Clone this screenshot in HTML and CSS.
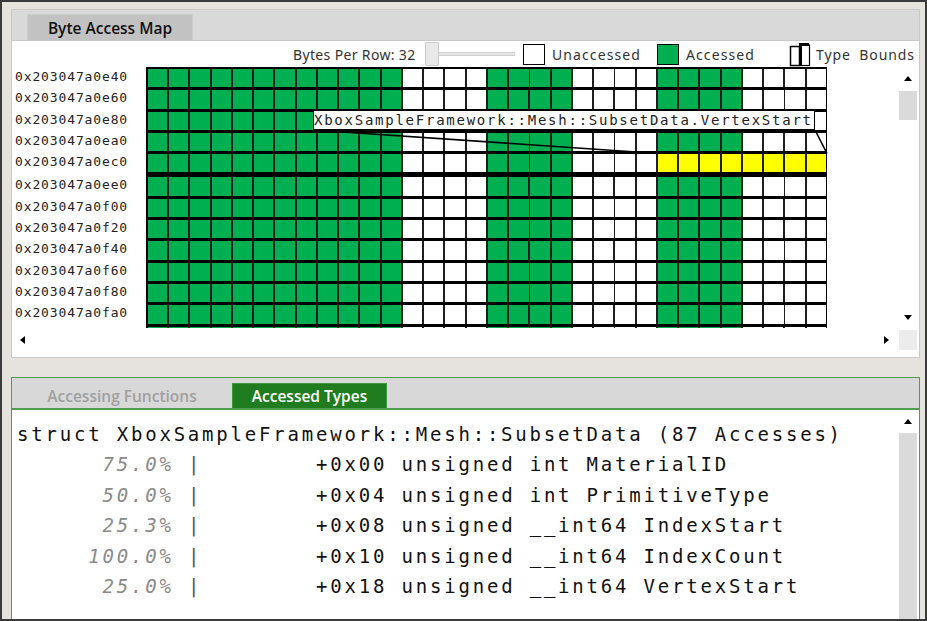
FILE: index.html
```html
<!DOCTYPE html>
<html>
<head>
<meta charset="utf-8">
<title>Byte Access Map</title>
<link rel="stylesheet" href="styles.css">
</head>
<body>
<div class="app">
  <section class="panel map-panel">
    <div class="tabbar">
      <div class="tab-map">Byte Access Map</div>
    </div>
    <div class="map-body">
      <div class="legend">
        <span class="bpr">Bytes Per Row: 32</span>
        <span class="slider"><span class="s-thumb"></span><span class="s-track"></span></span>
        <span class="swatch sw-white"></span><span class="lg-text t-unacc">Unaccessed</span>
        <span class="swatch sw-green"></span><span class="lg-text t-acc">Accessed</span>
        <svg class="bounds-icon" width="22" height="24" viewBox="0 0 22 24">
          <rect x="1.5" y="3.5" width="9" height="19" fill="#fff" stroke="#000" stroke-width="1.5"/>
          <rect x="11" y="2" width="9.5" height="20.5" fill="#fff" stroke="#000" stroke-width="1.2"/>
          <path d="M11.5 23 V1.5 H20" fill="none" stroke="#000" stroke-width="3"/>
        </svg>
        <span class="lg-text t-bounds">Type Bounds</span>
      </div>

      <div class="viewport">
        <div class="rows">
          <div class="row first"><span class="addr">0x203047a0e40</span><div class="cells"></div></div>
          <div class="row"><span class="addr">0x203047a0e60</span><div class="cells"></div></div>
          <div class="row"><span class="addr">0x203047a0e80</span><div class="cells"></div></div>
          <div class="row"><span class="addr">0x203047a0ea0</span><div class="cells"></div></div>
          <div class="row bound"><span class="addr">0x203047a0ec0</span><div class="cells hl"></div></div>
          <div class="row"><span class="addr">0x203047a0ee0</span><div class="cells"></div></div>
          <div class="row"><span class="addr">0x203047a0f00</span><div class="cells"></div></div>
          <div class="row"><span class="addr">0x203047a0f20</span><div class="cells"></div></div>
          <div class="row"><span class="addr">0x203047a0f40</span><div class="cells"></div></div>
          <div class="row"><span class="addr">0x203047a0f60</span><div class="cells"></div></div>
          <div class="row"><span class="addr">0x203047a0f80</span><div class="cells"></div></div>
          <div class="row"><span class="addr">0x203047a0fa0</span><div class="cells"></div></div>
          <div class="row"><span class="addr">0x203047a0fc0</span><div class="cells"></div></div>
        </div>
        <svg class="leader" width="887" height="261" viewBox="0 0 887 261">
          <line x1="301" y1="63" x2="646" y2="86.5" stroke="#000" stroke-width="1.6"/>
          <line x1="803" y1="63" x2="815" y2="86.5" stroke="#000" stroke-width="1.6"/>
        </svg>
        <div class="tip">XboxSampleFramework::Mesh::SubsetData.VertexStart</div>
      </div>

      <div class="vscroll">
        <div class="sb-btn"><span class="arr-up"></span></div>
        <div class="v-thumb"></div>
        <div class="sb-fill"></div>
        <div class="sb-btn"><span class="arr-down"></span></div>
      </div>

      <div class="hscroll">
        <span class="arr-left"></span>
        <span class="arr-right"></span>
      </div>
      <div class="corner"></div>
    </div>
  </section>

  <section class="panel types-panel">
    <div class="types-tabbar">
      <div class="tab-inactive">Accessing Functions</div>
      <div class="tab-active">Accessed Types</div>
    </div>
    <div class="types-body">
      <div class="code">
        <div class="line">struct XboxSampleFramework::Mesh::SubsetData (87 Accesses)</div>
        <div class="line">      <span class="pct">75.0%</span> <span class="bar">|</span>        +0x00 unsigned int MaterialID</div>
        <div class="line">      <span class="pct">50.0%</span> <span class="bar">|</span>        +0x04 unsigned int PrimitiveType</div>
        <div class="line">      <span class="pct">25.3%</span> <span class="bar">|</span>        +0x08 unsigned __int64 IndexStart</div>
        <div class="line">     <span class="pct">100.0%</span> <span class="bar">|</span>        +0x10 unsigned __int64 IndexCount</div>
        <div class="line">      <span class="pct">25.0%</span> <span class="bar">|</span>        +0x18 unsigned __int64 VertexStart</div>
      </div>
      <div class="vscroll2">
        <div class="sb-btn2"><span class="arr-up"></span></div>
        <div class="track2"></div>
      </div>
    </div>
  </section>
</div>
</body>
</html>
```

FILE: styles.css
```css
* { box-sizing: border-box; margin: 0; padding: 0; }

html, body {
  width: 927px;
  height: 621px;
  overflow: hidden;
  background: #e6e2de;
}

.app {
  width: 927px;
  height: 621px;
  border: 2px solid #3a3a3a;
  background: #e6e2de;
  overflow: hidden;
  padding: 7px 0 0 9px;
}

.panel { width: 909px; }

/* ---------- top panel ---------- */
.map-panel {
  border: 1px solid #c9c9c9;
  background: #fff;
}

.tabbar {
  height: 31px;
  background: #d9d9d9;
  border-bottom: 1px solid #c9c9c9;
  display: flex;
  align-items: flex-end;
  padding-left: 15px;
}

.tab-map {
  width: 166px;
  height: 26px;
  background: #c2c2c2;
  border: 1px solid #cdcdcd;
  border-bottom: none;
  display: flex;
  align-items: center;
  justify-content: center;
  font: 600 15.5px "Open Sans", "Noto Sans", sans-serif;
  color: #111;
}

.map-body {
  display: grid;
  grid-template-columns: 887px 18px;
  grid-template-rows: 26px 261px 29px;
  padding-right: 2px;
}

.legend {
  grid-column: 1 / 3;
  display: flex;
  align-items: center;
  padding-left: 281px;
  font: 13px "Noto Sans", sans-serif;
  color: #333;
  white-space: nowrap;
}

.bpr { width: 132px; font-size: 14px; letter-spacing: 0.35px; }

.slider {
  width: 90px;
  height: 24px;
  display: flex;
  align-items: center;
  margin-right: 8px;
}
.s-thumb {
  width: 14px;
  height: 24px;
  background: #e9e9e9;
  border: 1px solid #cacaca;
  border-radius: 2px;
}
.s-track {
  width: 76px;
  height: 4px;
  background: #e6e6e6;
  border: 1px solid #d2d2d2;
  border-left: none;
}

.swatch {
  width: 22px;
  height: 21px;
  border: 1.5px solid #000;
  margin-top: 1px;
}
.sw-white { background: #fff; }
.sw-green { background: #00b050; }

.lg-text {
  font-size: 14px;
  letter-spacing: 1.1px;
  margin-left: 7px;
}
.t-unacc { width: 105px; }
.t-acc { width: 103px; }
.t-bounds { margin-left: 5px; word-spacing: 4px; letter-spacing: 0.9px; }

.bounds-icon { margin-top: 1px; }

/* map viewport */
.viewport {
  position: relative;
  overflow: hidden;
  padding-left: 3px;
}

.row {
  display: flex;
  align-items: flex-start;
}

.addr {
  width: 131px;
  height: 18.3px;
  line-height: 18.3px;
  font: 13px "DejaVu Sans Mono", monospace;
  letter-spacing: 0.87px;
  color: #222;
  white-space: nowrap;
}

.cells {
  width: 681px;
  height: 21.3px;
  border-style: solid;
  border-color: #000;
  border-width: 0 1px 3px 2px;
  background:
    repeating-linear-gradient(to right, transparent 0 19.25px, #1e1e1e 19.25px 21.25px),
    linear-gradient(to right,
      #00b050 0 255px, #fff 255px 340px,
      #00b050 340px 425px, #fff 425px 510px,
      #00b050 510px 595px, #fff 595px 680px);
}

.cells.hl {
  background:
    repeating-linear-gradient(to right, transparent 0 19.25px, #1e1e1e 19.25px 21.25px),
    linear-gradient(to right,
      #00b050 0 255px, #fff 255px 340px,
      #00b050 340px 425px, #fff 425px 510px,
      #ffff00 510px 680px);
}

.row.first .cells { height: 23.3px; border-top-width: 2px; }
.row.first .addr { margin-top: 2px; }
.row.bound .cells { height: 23.3px; border-bottom-width: 5px; }

.leader {
  position: absolute;
  left: 0;
  top: 0;
  pointer-events: none;
}

.tip {
  position: absolute;
  left: 301px;
  top: 43px;
  width: 502px;
  height: 20px;
  background: #fff;
  border: 1px solid #000;
  font: 14px "DejaVu Sans Mono", monospace;
  letter-spacing: 1.75px;
  line-height: 18px;
  padding-left: 0;
  color: #222;
  white-space: nowrap;
  overflow: hidden;
}

/* scrollbars */
.vscroll {
  grid-column: 2;
  grid-row: 2;
  display: flex;
  flex-direction: column;
}
.sb-btn {
  height: 22px;
  display: flex;
  align-items: center;
  justify-content: center;
}
.v-thumb {
  margin-top: 2px;
  height: 29px;
  background: #dadada;
}
.sb-fill { flex: 1; }

.arr-up {
  width: 0; height: 0;
  border-left: 4.5px solid transparent;
  border-right: 4.5px solid transparent;
  border-bottom: 5px solid #000;
}
.arr-down {
  width: 0; height: 0;
  border-left: 4.5px solid transparent;
  border-right: 4.5px solid transparent;
  border-top: 5px solid #000;
}
.arr-left {
  width: 0; height: 0;
  border-top: 4.5px solid transparent;
  border-bottom: 4.5px solid transparent;
  border-right: 5px solid #000;
}
.arr-right {
  width: 0; height: 0;
  border-top: 4.5px solid transparent;
  border-bottom: 4.5px solid transparent;
  border-left: 5px solid #000;
}

.hscroll {
  grid-column: 1;
  grid-row: 3;
  height: 24px;
  display: flex;
  align-items: center;
  justify-content: space-between;
  padding: 0 10px 0 8px;
}
.corner {
  grid-column: 2;
  grid-row: 3;
  margin-top: 2px;
  height: 20px;
  background: #ececec;
}

/* ---------- bottom panel ---------- */
.types-panel {
  margin-top: 19px;
  border: 1px solid #4f9d4f;
  border-bottom: none;
  height: 260px;
  background: #fff;
}

.types-tabbar {
  height: 32px;
  background: #d8d8d8;
  border-bottom: 2px solid #4f9d4f;
  display: flex;
  align-items: flex-end;
}

.tab-inactive,
.tab-active {
  height: 25px;
  display: flex;
  align-items: center;
  justify-content: center;
  font: 600 15.5px "Open Sans", "Noto Sans", sans-serif;
  white-space: nowrap;
}
.tab-inactive { width: 220px; color: #a0a0a0; }
.tab-active {
  width: 155px;
  background: #1f7d1f;
  color: #fff;
  border: 1px solid #3c963c;
  border-bottom: none;
}

.types-body {
  display: grid;
  grid-template-columns: 1fr 18px;
  padding-right: 2px;
  height: 230px;
}

.code {
  padding: 9px 0 0 5px;
  font: 19px "DejaVu Sans Mono", monospace;
  letter-spacing: 2.8px;
  line-height: 30.4px;
  color: #111;
}
.line { white-space: pre; }
.pct { font-style: italic; color: #8a8a8a; }
.bar { color: #555; }

.vscroll2 {
  display: flex;
  flex-direction: column;
}
.sb-btn2 {
  height: 23px;
  display: flex;
  align-items: center;
  justify-content: center;
}
.track2 {
  flex: 1;
  background: #dadada;
}
```
